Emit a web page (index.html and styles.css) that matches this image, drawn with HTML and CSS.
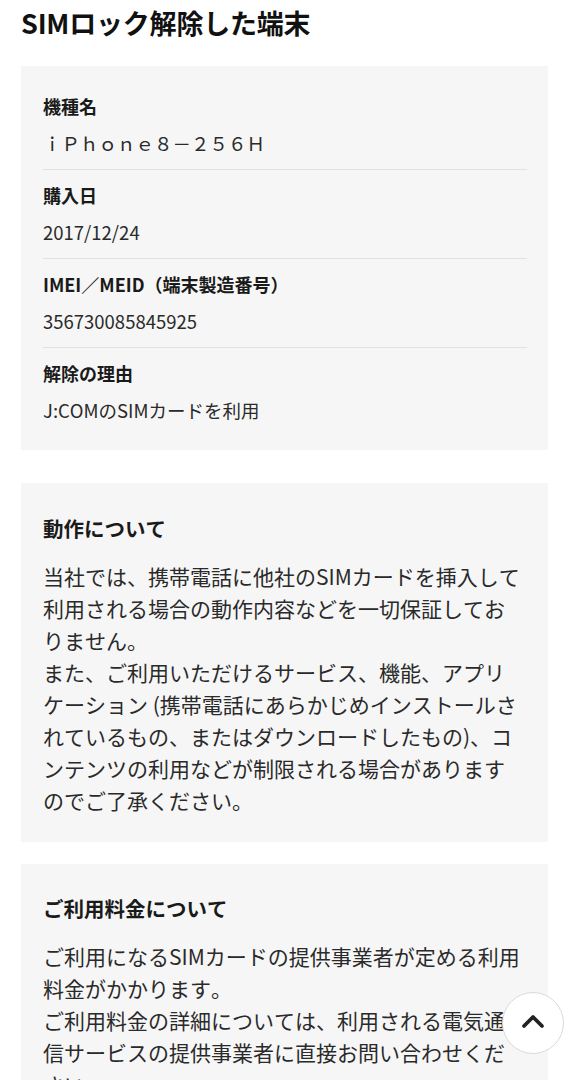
FILE: index.html
```html
<!DOCTYPE html>
<html lang="ja">
<head>
<meta charset="utf-8">
<title>SIMロック解除した端末</title>
<link rel="stylesheet" href="styles.css">
</head>
<body>
<main class="page">
  <h1 class="page-title">SIMロック解除した端末</h1>

  <section class="card spec-card">
    <dl class="spec-list">
      <div class="spec-item">
        <dt class="spec-label">機種名</dt>
        <dd class="spec-value">ｉＰｈｏｎｅ８－２５６Ｈ</dd>
      </div>
      <div class="spec-item">
        <dt class="spec-label">購入日</dt>
        <dd class="spec-value">2017/12/24</dd>
      </div>
      <div class="spec-item">
        <dt class="spec-label">IMEI／MEID（端末製造番号）</dt>
        <dd class="spec-value">356730085845925</dd>
      </div>
      <div class="spec-item">
        <dt class="spec-label">解除の理由</dt>
        <dd class="spec-value">J:COMのSIMカードを利用</dd>
      </div>
    </dl>
  </section>

  <section class="card note-card note-first">
    <h2 class="note-title">動作について</h2>
    <p class="note-body">当社では、携帯電話に他社のSIMカードを挿入して利用される場合の動作内容などを一切保証しておりません。<br>また、ご利用いただけるサービス、機能、アプリケーション (携帯電話にあらかじめインストールされているもの、またはダウンロードしたもの)、コンテンツの利用などが制限される場合がありますのでご了承ください。</p>
  </section>

  <section class="card note-card note-second">
    <h2 class="note-title">ご利用料金について</h2>
    <p class="note-body">ご利用になるSIMカードの提供事業者が定める利用料金がかかります。<br>ご利用料金の詳細については、利用される電気通信サービスの提供事業者に直接お問い合わせください。</p>
  </section>
</main>

<button class="to-top" type="button" aria-label="ページの先頭へ">
  <svg width="24" height="16" viewBox="0 0 24 16" aria-hidden="true">
    <path d="M3 13 L12 4 L21 13" fill="none" stroke="#222" stroke-width="3.8" stroke-linecap="round" stroke-linejoin="round"/>
  </svg>
</button>
</body>
</html>
```

FILE: styles.css
```css
* {
  box-sizing: border-box;
}

html, body {
  margin: 0;
  padding: 0;
  background: #ffffff;
}

body {
  font-family: "Noto Sans CJK JP", "Noto Sans", "Liberation Sans", sans-serif;
  color: #222222;
  line-break: strict;
  font-kerning: none;
}

.page {
  padding: 5px 21px 40px;
}

.page-title {
  margin: 0 0 25px;
  font-size: 27px;
  line-height: 36px;
  font-weight: 700;
  color: #111111;
  letter-spacing: -0.2px;
}

.card {
  background: #f6f6f6;
  padding-left: 22px;
  padding-right: 21px;
}

.spec-card {
  padding-top: 27px;
  padding-bottom: 27px;
}

.spec-list {
  margin: 0;
}

.spec-item {
  padding-bottom: 13px;
  border-bottom: 1px solid #e2e2e2;
  margin-bottom: 12px;
}

.spec-item:last-child {
  padding-bottom: 0;
  border-bottom: 0;
  margin-bottom: 0;
}

.spec-label {
  margin: 0;
  font-size: 18px;
  line-height: 26px;
  font-weight: 700;
  color: #1a1a1a;
}

.spec-value {
  margin: 11px 0 0;
  font-size: 18.5px;
  line-height: 26px;
  color: #2a2a2a;
}

.note-first {
  margin-top: 33px;
  padding-top: 31px;
  padding-bottom: 26px;
}

.note-second {
  margin-top: 22px;
  padding-top: 30px;
  padding-bottom: 26px;
}

.note-title {
  margin: 0;
  font-size: 20.5px;
  line-height: 28px;
  font-weight: 700;
  color: #1a1a1a;
}

.note-body {
  margin: 18px 0 0;
  max-width: 481px;
  font-size: 21px;
  line-height: 32px;
  color: #2a2a2a;
}

.to-top {
  position: fixed;
  right: 5px;
  bottom: 26px;
  width: 62px;
  height: 62px;
  border-radius: 50%;
  border: 1px solid #d9d9d9;
  background: #ffffff;
  display: flex;
  align-items: center;
  justify-content: center;
  padding: 0 0 4px;
  cursor: pointer;
}
```
